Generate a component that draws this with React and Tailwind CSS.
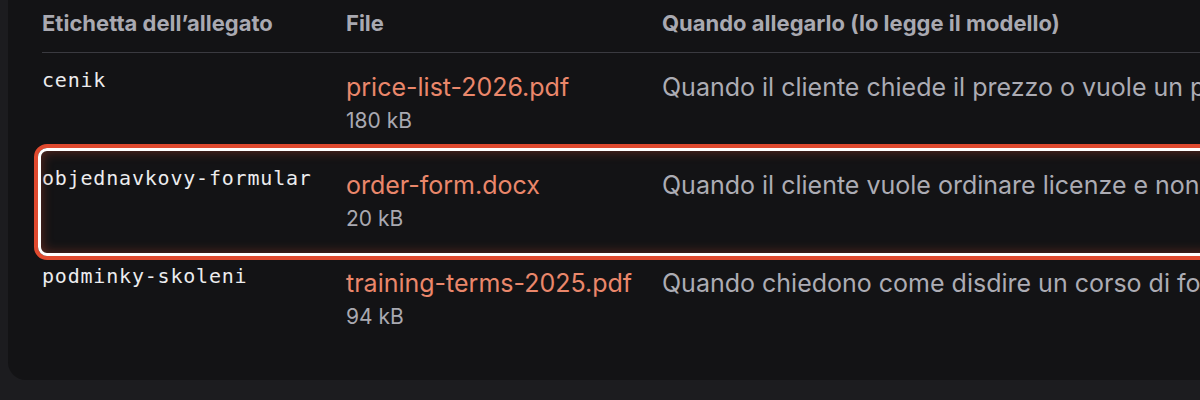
import React from "react";

const rows = [
  { label: "cenik", file: "price-list-2026.pdf", size: "180 kB", desc: "Quando il cliente chiede il prezzo o vuole un preventivo per le licenze" },
  { label: "objednavkovy-formular", file: "order-form.docx", size: "20 kB", desc: "Quando il cliente vuole ordinare licenze e non ha ancora un account", hl: true },
  { label: "podminky-skoleni", file: "training-terms-2025.pdf", size: "94 kB", desc: "Quando chiedono come disdire un corso di formazione o spostarlo" },
];

export default function App() {
  return (
    <div className="w-[1200px] h-[400px] overflow-hidden bg-[#1c1c1f] pl-[8px]" style={{ fontFamily: "Inter, 'Noto Sans', sans-serif" }}>
      <div className="w-[1300px] h-[380px] rounded-bl-[18px] bg-[#131315] pl-[34px]">
        <div className="flex h-[53px] items-center border-b border-[#3a3a40] pb-[6px] text-[22px] font-bold text-[#a9a9b1]">
          <div className="w-[304px] shrink-0">Etichetta dell’allegato</div>
          <div className="w-[316px] shrink-0">File</div>
          <div className="whitespace-nowrap">Quando allegarlo (lo legge il modello)</div>
        </div>
        {rows.map((r) => (
          <div key={r.label} className="relative flex h-[98px]">
            {r.hl && (
              <div className="pointer-events-none absolute left-[-8px] right-[-20px] top-[-7px] bottom-[-11px] rounded-[13px] border-[4px] border-[#e04a2f]">
                <div className="h-full w-full rounded-[9px] border-[3px] border-white shadow-[inset_0_0_12px_rgba(200,70,45,0.45)]" />
              </div>
            )}
            <div className="w-[304px] shrink-0 pt-[13px] text-[20px] leading-[28px] tracking-[0.8px] text-[#ececee]" style={{ fontFamily: "'DejaVu Sans Mono', monospace" }}>
              {r.label}
            </div>
            <div className="w-[316px] shrink-0 pt-[19px]">
              <div className="text-[25px] leading-[30px] text-[#ea876b]">{r.file}</div>
              <div className="mt-[6px] text-[21px] leading-[26px] text-[#a9a9b1]">{r.size}</div>
            </div>
            <div className="whitespace-nowrap pt-[19px] text-[25px] leading-[30px] text-[#acacb4]">{r.desc}</div>
          </div>
        ))}
      </div>
    </div>
  );
}
